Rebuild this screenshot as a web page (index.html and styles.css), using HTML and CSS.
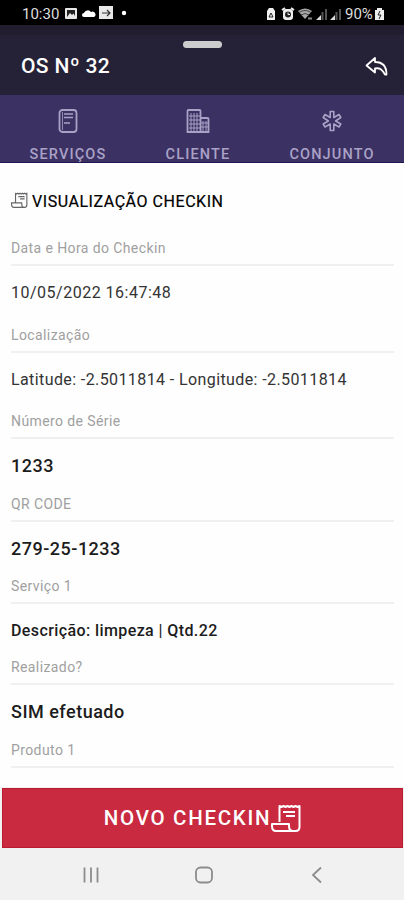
FILE: index.html
```html
<!DOCTYPE html>
<html lang="pt-BR">
  <head>
    <meta charset="UTF-8" />
    <meta name="viewport" content="width=device-width, initial-scale=1.0" />
    <title>OS Nº 32</title>
    <link rel="stylesheet" href="styles.css">
  </head>
  <body>
    <div class="status-bar">
      <span class="clock">10:30</span>
      <svg class="status-left" width="70" height="16" viewBox="0 0 70 16">
        <rect x="1" y="2" width="12" height="11" rx="1" fill="#e8e8e8" />
        <path d="M3 4h8v7H3z" fill="#222" />
        <path d="M3 11l3-4 2 2 1.500-1.500L11 10v1z" fill="#e8e8e8" />
        <path d="M20 11a2 2 0 0 1 0-4 4 4 0 0 1 7-1 2.600 2.600 0 0 1 3 5z" fill="#fff" />
        <rect x="35" y="0" width="14" height="13" fill="#e8e8e8" />
        <path d="M38 7h7M43 4l3 3-3 3" fill="none" stroke="#333" stroke-width="1.200" />
        <circle cx="60" cy="7" r="2.200" fill="#fff" />
      </svg>
      <svg class="status-right" width="80" height="16" viewBox="0 0 80 16">
        <path d="M2 5l2-3h4l2 3v9H2z" fill="#f0f0f0" />
        <path d="M4 11l2-4 2 4z" fill="none" stroke="#222" />
        <path d="M17 4l3-2M26 2l3 2" stroke="#eee" stroke-width="2" />
        <rect x="18" y="3" width="10" height="11" rx="3" fill="#eee" />
        <circle cx="23" cy="8.500" r="3" fill="#222" />
        <path d="M23 6.500v2h2" fill="none" stroke="#eee" />
        <path d="M33 5q7-5 14 0l-7 8z" fill="#aaa" />
        <path d="M34 6.500q6-4 12 0M36 9q4-3 8 0" fill="none" stroke="#444" />
        <path d="M43 12.500h4" stroke="#888" stroke-width="2" />
        <path d="M51 14h5V9zM65 14h5V9z" fill="#ddd" />
        <path d="M57.500 14V6M61 14V3M71.500 14V6M75 14V3" stroke="#555" stroke-width="2" />
      </svg>
      <span class="percent">90%</span>
      <svg class="battery" width="9" height="14" viewBox="0 0 9 14">
        <path d="M0 3h2V1h5v2h2v10H0z" fill="#eee" />
        <path d="M5 4L3 8h3l-2 4" fill="none" stroke="#222" />
      </svg>
    </div>

    <header class="header">
      <div class="handle"></div>
      <h1>OS Nº 32</h1>
      <svg class="back" width="24" height="22" viewBox="0 0 24 22">
        <path d="M11 3L2.500 10.500l8.500 7v-4c5-1 7 1 10 6h1.500c0-8-4-12.500-11.500-12.500z" fill="none" stroke="#fff" stroke-width="1.800" stroke-linejoin="round" />
      </svg>
    </header>

    <nav class="tabs">
      <div class="tab">
        <svg width="24" height="26" viewBox="0 0 24 26" fill="none" stroke="currentColor" stroke-width="1.800">
          <rect x="3.500" y="2" width="17" height="22" rx="3" />
          <path d="M6.500 4v18" stroke-width="0.800" />
          <path d="M8 6h9M8 9.500h9M8 15h6" stroke-width="1.600" />
        </svg>
        <span>SERVIÇOS</span>
      </div>
      <div class="tab">
        <svg width="24" height="26" viewBox="0 0 24 26" fill="none" stroke="currentColor" stroke-width="1.800">
          <path d="M1.500 24V3q0-1 1-1h11q1 0 1 1v21zM14.500 10h7q1 0 1 1v13h-8" />
          <path d="M5 5v18M8 5v18M11 5v18M17 13v10M20 13v10M3 8h11M3 12h11M3 16h11M3 20h11M15 15h7M15 19h7" stroke-width="1" />
        </svg>
        <span>CLIENTE</span>
      </div>
      <div class="tab">
        <svg width="24" height="26" viewBox="0 0 24 26" fill="none" stroke="currentColor" stroke-width="1.600" stroke-linejoin="round">
          <path d="M10.200 3.500h3.600v6l5.200-3 1.800 3-5.200 3.500 5.200 3-1.800 3-5.200-3v6.500h-3.600V16l-5.200 3-1.800-3 5.200-3-5.200-3.500 1.800-3 5.200 3z" />
        </svg>
        <span>CONJUNTO</span>
      </div>
    </nav>

    <main class="content">
      <h2>
        <svg class="receipt" width="17" height="16" viewBox="0 0 30 28">
          <path d="M8 18V2l2 1.500L12 2l2 1.500L16 2l2 1.500L20 2l2 1.500L24 2l2 1.500L28 2v21q0 4-4 4H5q-4 0-4-5v-3h18v3q0 5 4 5M13 8h11M16 12h8" />
        </svg>
        <span>VISUALIZAÇÃO CHECKIN</span>
      </h2>

      <div class="field datetime">
        <label>Data e Hora do Checkin</label>
        <p>10/05/2022 16:47:48</p>
      </div>
      <div class="field location">
        <label>Localização</label>
        <p>Latitude: -2.5011814 - Longitude: -2.5011814</p>
      </div>
      <div class="field strong serial">
        <label>Número de Série</label>
        <p>1233</p>
      </div>
      <div class="field strong qrcode">
        <label>QR CODE</label>
        <p>279-25-1233</p>
      </div>
      <div class="field strong service">
        <label>Serviço 1</label>
        <p>Descrição: limpeza | Qtd.22</p>
      </div>
      <div class="field strong done">
        <label>Realizado?</label>
        <p>SIM efetuado</p>
      </div>
      <div class="field">
        <label>Produto 1</label>
      </div>
    </main>

    <footer class="footer">
      <button class="new-checkin">
        <span>NOVO CHECKIN</span>
        <svg class="receipt" width="30" height="28" viewBox="0 0 30 28">
          <path d="M8.500 18V2l2 1 2-1 2 1 2-1 2 1 2-1 2 1 2-1 2 1 2-1v21q0 4-4 4H5q-4 0-4-5v-2h17v2q0 5 4 5M12 8h12M15 12h9" />
        </svg>
      </button>
      <div class="android-nav">
        <svg width="18" height="18" viewBox="0 0 18 18"><path d="M2.500 1.500v15M9 1.500v15M15.500 1.500v15" /></svg>
        <svg width="18" height="18" viewBox="0 0 18 18"><rect x="1" y="1.500" width="16" height="15" rx="4.500" /></svg>
        <svg width="18" height="18" viewBox="0 0 18 18"><path d="M13 1.500L5 9l8 7.500" /></svg>
      </div>
    </footer>
  </body>
</html>
```

FILE: styles.css
```css
* {
  margin: 0;
  padding: 0;
  box-sizing: border-box;
}

body {
  font-family: Roboto, "Liberation Sans", sans-serif;
  background-color: #fefefe;
  width: 404px;
  height: 900px;
  display: flex;
  flex-direction: column;
  overflow: hidden;
}

svg {
  display: block;
  flex-shrink: 0;
}

.status-bar {
  height: 25px;
  background-color: #000;
  color: #ddd;
  display: flex;
  align-items: center;
  padding: 2px 20px 0 22px;
  font-size: 15px;
}

.clock {
  width: 42px;
}

.status-right {
  margin-left: auto;
}

.percent {
  width: 30px;
}

.header {
  position: relative;
  height: 70px;
  background-color: #252136;
  border-top: 10px solid #211d2e;
  color: #fff;
  display: flex;
  align-items: center;
  justify-content: space-between;
  padding: 2px 16px 0 21px;
}

.handle {
  position: absolute;
  top: 6px;
  left: 183px;
  width: 39px;
  height: 7px;
  border-radius: 4px;
  background-color: #ccc;
}

h1 {
  font-size: 21px;
  font-weight: 500;
  letter-spacing: 0.4px;
}

.tabs {
  height: 68px;
  background-color: #3b3163;
  border-bottom: 1px solid #211653;
  display: grid;
  grid-template-columns: 136px 124px 144px;
  color: #aaa2c6;
}

.tab {
  display: flex;
  flex-direction: column;
  align-items: center;
  padding-top: 13px;
  font-size: 14.5px;
  font-weight: 500;
  letter-spacing: 1.15px;
}

.tab span {
  margin-top: 12px;
}

.content {
  flex: 1;
  padding: 0 10px 0 11px;
  overflow: hidden;
}

h2 {
  display: flex;
  align-items: center;
  gap: 4px;
  height: 67px;
  padding-top: 10px;
  font-size: 16px;
  font-weight: 400;
  letter-spacing: 0.55px;
  color: #000;
  -webkit-text-stroke: 0.2px #000;
}

h2 .receipt {
  margin-bottom: 4px;
}

.receipt {
  fill: none;
  stroke: #666;
  stroke-width: 2;
  stroke-linejoin: round;
}

label {
  display: block;
  height: 36px;
  line-height: 37px;
  border-bottom: 2px solid #f0f0f0;
  font-size: 14px;
  letter-spacing: 0.4px;
  color: #a0a0a0;
}

.field p {
  height: 51px;
  line-height: 53px;
  font-size: 16px;
  letter-spacing: 0.5px;
  color: #333;
  white-space: nowrap;
}

.field.strong p {
  font-size: 18px;
  font-weight: 500;
  color: #1c1c1c;
  height: 47px;
  line-height: 53px;
}

.field.location p {
  height: 50px;
  letter-spacing: 0.4px;
}

.field.qrcode p {
  height: 46px;
}

.field.service p {
  font-size: 16px;
  height: 45px;
  letter-spacing: 0.4px;
}

.new-checkin {
  display: flex;
  align-items: center;
  justify-content: center;
  width: 401px;
  height: 60px;
  margin-left: 2px;
  padding-bottom: 1px;
  border: 1px solid #b81c2d;
  background-color: #c92a40;
  color: #fff;
  font-family: inherit;
  font-size: 20.5px;
  font-weight: 500;
  letter-spacing: 1.7px;
}

.new-checkin .receipt {
  stroke: #fff;
}

.footer {
  height: 113px;
  background-color: #f1f1f1;
  border-top: 1px solid #f1f1f1;
}

.android-nav {
  display: flex;
  justify-content: space-between;
  padding: 18px 78px 0 82px;
}

.android-nav svg {
  fill: none;
  stroke: #8c8c8c;
  stroke-width: 1.8;
}
```
